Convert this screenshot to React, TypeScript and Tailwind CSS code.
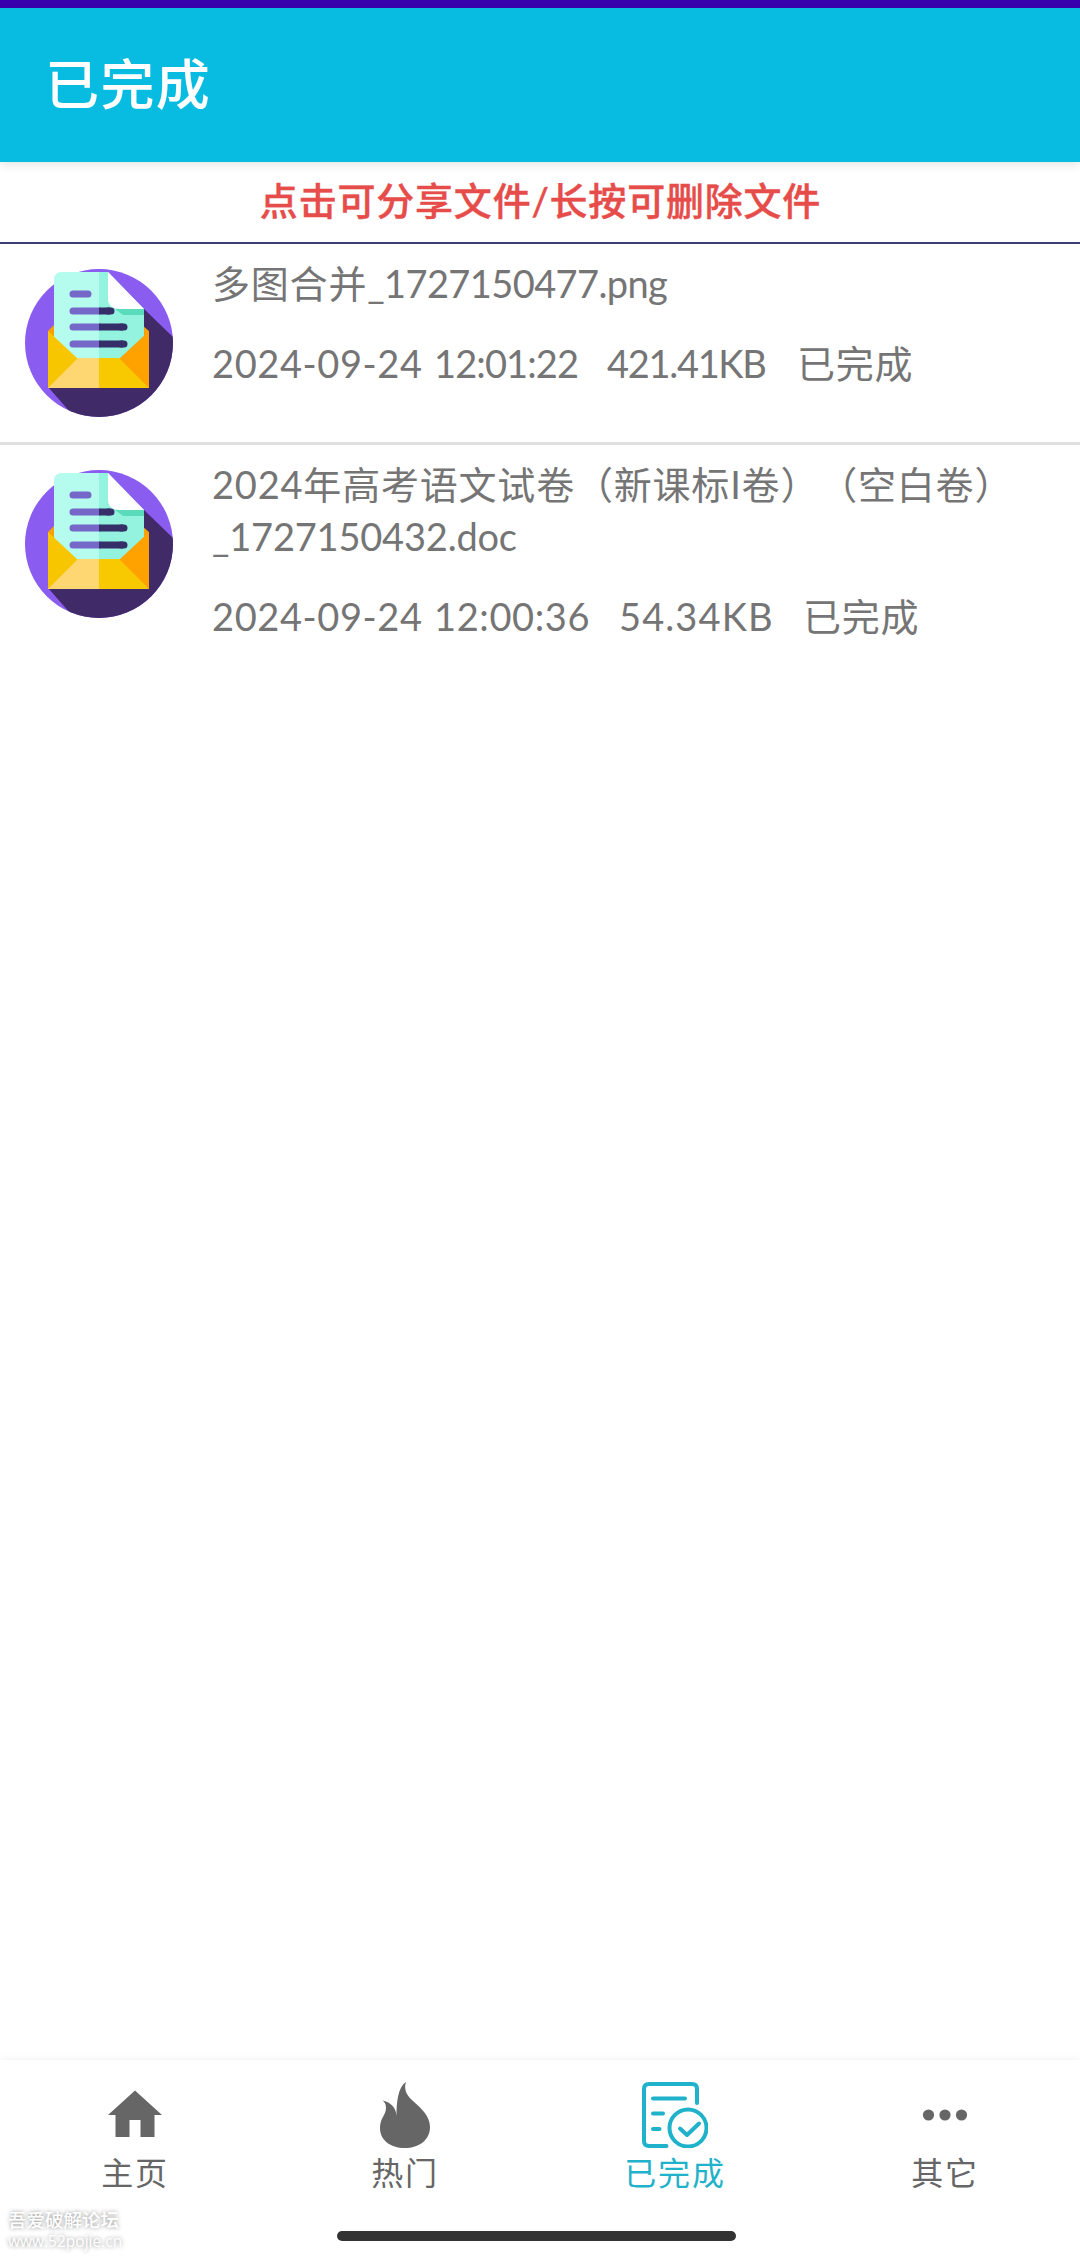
import type { ReactNode } from "react";

interface FileItem {
  id: string;
  name: ReactNode;
  meta: ReactNode;
}

interface TabItem {
  label: string;
  icon: ReactNode;
  active?: boolean;
}

function FileIcon() {
  return (
    <svg viewBox="0 0 150 150" className="h-[150px] w-[150px] shrink-0">
      <defs>
        <clipPath id="disc">
          <circle cx="75" cy="75" r="74" />
        </clipPath>
      </defs>
      <circle cx="75" cy="75" r="74" fill="#8b5cf0" />
      <path d="M25 120 L60 160 H150 V70 L120 41 Z" fill="#402a68" clipPath="url(#disc)" />
      <path d="M24 63 L30 57 H118 L125 63 V120 H24 Z" fill="#f8a000" />
      <path d="M30 12 Q30 4 38 4 H75 V95 H46 L30 70 Z" fill="#b5fbee" />
      <path d="M75 4 H84 L120 41 V72 L100 95 H75 Z" fill="#93f3de" />
      <path d="M84 4 L120 41 H96 Q84 41 84 30 Z" fill="#ffffff" />
      <path d="M91 41 H120 V47 H99 Z" fill="#5adcbc" />
      <g strokeWidth="7">
        <path d="M49 26 H64 M49 43 H75 M49 59 H75 M49 76 H75" stroke="#7668c8" strokeLinecap="round" />
        <path d="M75 43 H86 M75 59 H99 M75 76 H99" stroke="#352e68" />
        <path d="M84 43 H87 M97 59 H100 M97 76 H100" stroke="#352e68" strokeLinecap="round" />
      </g>
      <path d="M24 63 L54 91 L50 106 L24 120 Z" fill="#f8c600" />
      <path d="M125 63 L95 91 L99 106 L125 120 Z" fill="#ffa200" />
      <path d="M24 120 L54 90 H75 V120 Z" fill="#ffd772" />
      <path d="M125 120 L95 90 H75 V120 Z" fill="#f8c800" />
    </svg>
  );
}

function HomeIcon() {
  return (
    <svg viewBox="0 0 66 66" className="h-[66px] w-[66px]" fill="currentColor">
      <path d="M33 8.5 L60 33 H52.5 V55 H38.5 V38 H27.5 V55 H13.5 V33 H6 Z" />
    </svg>
  );
}

function FlameIcon() {
  return (
    <svg viewBox="0 0 66 66" className="h-[66px] w-[66px]" fill="currentColor">
      <path d="M34 0 C31 8 36 15 41 19 C49 26 58 34 58 45 C58 58 47 66 33 66 C18 66 8 58 8 46 C8 36 14 33 14 26 C14 22 12.500 20 10.500 18.500 C18 20 24 25 24.500 34 C24.500 20 26 5 34 0 Z" />
    </svg>
  );
}

function DoneIcon() {
  return (
    <svg
      viewBox="0 0 66 66"
      className="h-[66px] w-[66px]"
      fill="none"
      stroke="currentColor"
      strokeWidth="4"
      strokeLinecap="round"
      strokeLinejoin="round"
    >
      <path d="M55 21 V7 Q55 2 50 2 H7 Q2 2 2 7 V59 Q2 64 7 64 H24.500" />
      <path d="M11 16.500 H43 M11 31.500 H21 M11 47 H17.500" />
      <circle cx="46" cy="46" r="18.500" />
      <path d="M38 46.500 L45 53 L57 41.500" />
    </svg>
  );
}

function MoreIcon() {
  return (
    <svg viewBox="0 0 66 66" className="h-[66px] w-[66px]" fill="currentColor">
      <circle cx="16.500" cy="33" r="5.600" />
      <circle cx="33" cy="33" r="5.600" />
      <circle cx="49.500" cy="33" r="5.600" />
    </svg>
  );
}

const files: FileItem[] = [
  {
    id: "1727150477",
    name: (
      <>
        多图合并<span className="tracking-[-0.6px]">_1727150477.png</span>
      </>
    ),
    meta: (
      <>
        <span className="w-[222px] tracking-[0.6px]">2024-09-24</span>
        <span className="w-[173px] tracking-[-0.9px]">12:01:22</span>
        <span className="w-[190px] tracking-[-1.3px]">421.41KB</span>
        <span>已完成</span>
      </>
    ),
  },
  {
    id: "1727150432",
    name: (
      <>
        2024年高考语文试卷（新课标I卷）（空白卷）
        <br />
        <span className="tracking-[-0.2px]">_1727150432.doc</span>
      </>
    ),
    meta: (
      <>
        <span className="w-[222px] tracking-[0.6px]">2024-09-24</span>
        <span className="w-[185px] tracking-[0.6px]">12:00:36</span>
        <span className="w-[184px] tracking-[1.1px]">54.34KB</span>
        <span>已完成</span>
      </>
    ),
  },
];

const tabs: TabItem[] = [
  { label: "主页", icon: <HomeIcon /> },
  { label: "热门", icon: <FlameIcon /> },
  { label: "已完成", icon: <DoneIcon />, active: true },
  { label: "其它", icon: <MoreIcon /> },
];

function FileRow({ file }: { file: FileItem }) {
  return (
    <li className="flex min-h-[201px] pl-6 pt-6">
      <FileIcon />
      <div className="-mt-[11px] ml-[38px] flex-1 text-[38px] leading-[52px] tracking-[0.8px] whitespace-nowrap text-[#757575] [text-spacing-trim:space-all]">
        <p>{file.name}</p>
        <p className="mt-7 flex">{file.meta}</p>
      </div>
    </li>
  );
}

export default function App() {
  return (
    <div className="flex h-[2258px] w-[1080px] flex-col overflow-hidden bg-white font-[Lato,'Noto_Sans_CJK_SC',sans-serif]">
      <div className="h-2 shrink-0 bg-[#3a00b0]" />
      <header className="z-10 flex h-[154px] shrink-0 items-center bg-[#07bce0] pl-[45px] pb-px shadow-[0_2px_10px_rgba(0,0,0,0.12)]">
        <h1 className="text-[54px] font-medium tracking-[1.4px] text-white">已完成</h1>
      </header>

      <div className="flex h-[82px] shrink-0 items-center justify-center border-b-2 border-[#3f3d75] pb-[3px] pl-px text-[38px] font-medium tracking-[0.8px] text-[#e64c4a] [-webkit-text-stroke:0.4px_#e64c4a]">
        点击可分享文件/长按可删除文件
      </div>

      <ul className="flex-1 divide-y-3 divide-[#e0e0e0]">
        {files.map((file) => (
          <FileRow key={file.id} file={file} />
        ))}
      </ul>

      <footer className="relative flex h-[198px] shrink-0 flex-col items-center shadow-[0_-1px_6px_rgba(0,0,0,0.06)]">
        <nav className="grid w-full grid-cols-4 pt-[22px]">
          {tabs.map((tab) => (
            <button
              key={tab.label}
              className={`flex flex-col items-center ${tab.active ? "text-[#1fb2ca]" : "text-[#666666]"}`}
            >
              {tab.icon}
              <span className="mt-[3px] text-[32px] leading-[43px] tracking-[1.8px]">{tab.label}</span>
            </button>
          ))}
        </nav>
        <div className="mt-[37px] ml-[-7px] h-[10px] w-[399px] rounded-full bg-[#333333]" />

        {/* forum watermark */}
        <div className="absolute bottom-[6px] left-2 text-[18.500px] leading-[21px] font-medium text-white [text-shadow:0_0_4px_rgba(0,0,0,0.45)]">
          <p>吾爱破解论坛</p>
          <p className="font-['Open_Sans',sans-serif] text-[15.500px]">www.52pojie.cn</p>
        </div>
      </footer>
    </div>
  );
}
